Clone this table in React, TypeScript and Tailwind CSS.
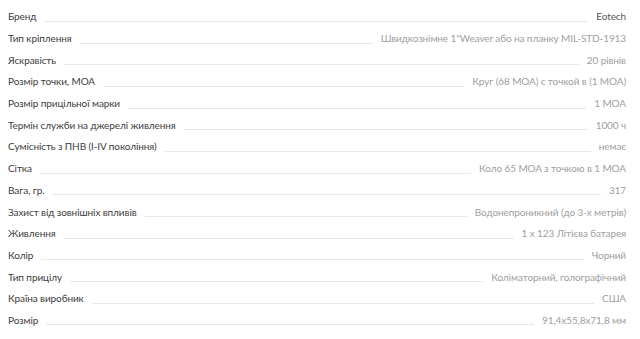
const specs: [string, string][] = [
  ['Бренд', 'Eotech'],
  ['Тип кріплення', 'Швидкознімне 1"Weaver або на планку MIL-STD-1913'],
  ['Яскравість', '20 рівнів'],
  ['Розмір точки, MOA', 'Круг (68 MOA) с точкой в (1 MOA)'],
  ['Розмір прицільної марки', '1 MOA'],
  ['Термін служби на джерелі живлення', '1000 ч'],
  ['Сумісність з ПНВ (I-IV покоління)', 'немає'],
  ['Сітка', 'Коло 65 MOA з точкою в 1 MOA'],
  ['Вага, гр.', '317'],
  ['Захист від зовнішніх впливів', 'Водонепроникний (до 3-х метрів)'],
  ['Живлення', '1 x 123 Літієва батарея'],
  ['Колір', 'Чорний'],
  ['Тип прицілу', 'Коліматорний, голографічний'],
  ['Країна виробник', 'США'],
  ['Розмір', '91,4x55,8x71,8 мм'],
];

export default function App() {
  return (
    <div className="w-[640px] h-[339px] bg-white pt-[6px] pl-[8px] pr-[14px] font-['Lato','Open_Sans',sans-serif] text-[10px] tracking-[-0.1px]">
      {specs.map(([label, value], i) => (
        <div key={i} className="flex items-center h-[21.7px]">
          <span className="text-[#3d3d3d] whitespace-nowrap">{label}</span>
          <span className="flex-1 mx-[8px] mt-[9px] border-b border-[#e8e8e8]" />
          <span className={(i === 0 ? 'text-[#555]' : 'text-[#a0a0a0]') + ' whitespace-nowrap'}>{value}</span>
        </div>
      ))}
    </div>
  );
}
